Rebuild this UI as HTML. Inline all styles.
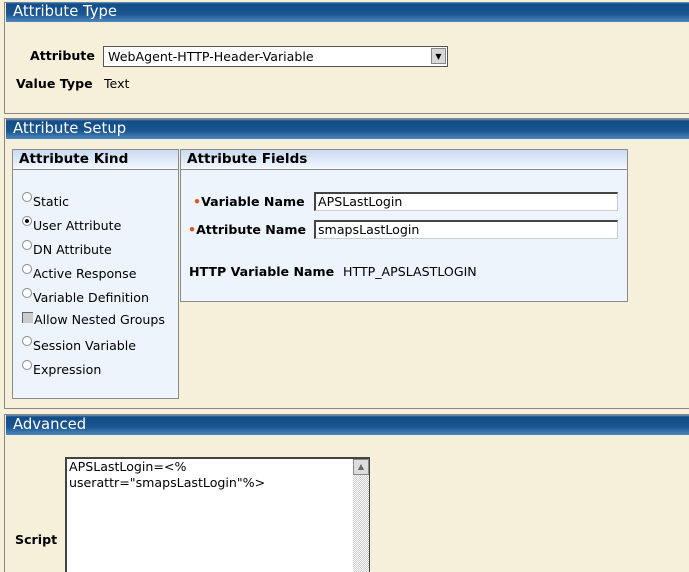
<!DOCTYPE html><html style="overflow:hidden"><head><style>
html,body{margin:0;width:689px;height:572px;overflow:hidden}
body{background:#f6f0da;font-family:"DejaVu Sans",Verdana,sans-serif;font-size:12.6px;color:#000;position:relative}
.a{position:absolute;white-space:nowrap}
.hdr{position:absolute;left:6px;width:690px;height:20px;background:linear-gradient(#6d95bf 0,#134d86 2px,#1a5590 60%,#4f88bf 100%);color:#fff;font-size:14.8px;line-height:20px;padding-left:7px;box-sizing:border-box}
.sec{position:absolute;left:4px;width:700px;border:1px solid #888;border-right:none;background:#f6f0da;box-sizing:border-box}
.box{position:absolute;border:1px solid #8a8a8a;background:#eef4fc}
.bh{height:19px;border-bottom:1px solid #8a8a8a;background:linear-gradient(#c8daf0,#f4f8fe);font-weight:bold;font-size:13.6px;line-height:19px;padding-left:6px}
.inp{position:absolute;background:#fff;border:1px solid #ccc;border-top:2px solid #444;border-left:2px solid #444;box-sizing:border-box;font-size:12.6px;line-height:15px;padding-left:2px;white-space:nowrap;overflow:hidden}
.r{position:absolute;left:22px;white-space:nowrap}
.rad{display:inline-block;width:8px;height:8px;border-radius:50%;border:1px solid #888;background:#fff;margin-right:1px;vertical-align:4px;position:relative}
.dot{color:#e0561c}
</style></head><body>
<div class="sec" style="top:2px;height:112px"></div>
<div class="hdr" style="top:2px">Attribute Type</div>
<div class="a" style="left:30px;top:48px;font-weight:bold">Attribute</div>
<div class="inp" style="left:103px;top:46px;width:345px;height:21px;border:1px solid #555;line-height:19px;padding-left:4px">WebAgent-HTTP-Header-Variable</div>
<div class="a" style="left:431px;top:48px;width:15px;height:16px;background:#d8d8d8;border:1px solid #888;box-sizing:border-box;font-size:8px;text-align:center;line-height:15px">▼</div>
<div class="a" style="left:16px;top:76px;font-weight:bold">Value Type</div>
<div class="a" style="left:104px;top:76px">Text</div>

<div class="sec" style="top:118px;height:291px"></div>
<div class="hdr" style="top:119px">Attribute Setup</div>
<div class="box" style="left:12px;top:149px;width:165px;height:248px"><div class="bh">Attribute Kind</div></div>
<div class="box" style="left:180px;top:149px;width:446px;height:151px"><div class="bh">Attribute Fields</div></div>
<div class="r" style="top:192px"><span class="rad"></span>Static</div>
<div class="r" style="top:216px"><span class="rad" style="background:radial-gradient(#000 30%,#fff 40%)"></span>User Attribute</div>
<div class="r" style="top:240px"><span class="rad"></span>DN Attribute</div>
<div class="r" style="top:264px"><span class="rad"></span>Active Response</div>
<div class="r" style="top:288px"><span class="rad"></span>Variable Definition</div>
<div class="r" style="top:312px"><span style="display:inline-block;width:10px;height:10px;background:#ccc;border-top:1px solid #666;border-left:1px solid #666;margin-right:1px;vertical-align:1px"></span>Allow Nested Groups</div>
<div class="r" style="top:336px"><span class="rad"></span>Session Variable</div>
<div class="r" style="top:360px"><span class="rad"></span>Expression</div>
<div class="a" style="left:193px;top:194px;font-weight:bold"><span class="dot">•</span>Variable Name</div>
<div class="inp" style="left:314px;top:192px;width:304px;height:19px">APSLastLogin</div>
<div class="a" style="left:188px;top:222px;font-weight:bold"><span class="dot">•</span>Attribute Name</div>
<div class="inp" style="left:314px;top:220px;width:304px;height:19px">smapsLastLogin</div>
<div class="a" style="left:189px;top:264px;font-weight:bold">HTTP Variable Name</div>
<div class="a" style="left:343px;top:264px">HTTP_APSLASTLOGIN</div>

<div class="sec" style="top:414px;height:170px"></div>
<div class="hdr" style="top:415px">Advanced</div>
<div class="a" style="left:15px;top:532px;font-weight:bold">Script</div>
<div class="inp" style="left:65px;top:457px;width:305px;height:130px;border:2px solid #444;line-height:16px">APSLastLogin=&lt;%<br>userattr="smapsLastLogin"%&gt;</div>
<div class="a" style="left:353px;top:459px;width:16px;height:120px;background:repeating-conic-gradient(#ccc 0 25%,#fff 0 50%) 0 0/2px 2px"></div>
<div class="a" style="left:353px;top:459px;width:16px;height:16px;background:#ddd;border:1px solid #888;box-sizing:border-box;font-size:8px;text-align:center;line-height:14px;color:#666">▲</div>
</body></html>
